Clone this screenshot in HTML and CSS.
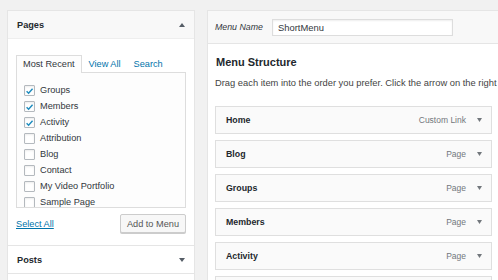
FILE: index.html
```html
<!DOCTYPE html>
<html lang="en">
<head>
  <meta charset="UTF-8" />
  <title>Menus</title>
  <link rel="stylesheet" href="styles.css">
</head>
<body>
  <div class="screen">
    <!-- Left column: items that can be added -->
    <aside class="sidebar">
      <div class="accordion">
        <section class="acc-section">
          <h3 class="acc-title">Pages
            <svg class="caret" width="6" height="4" viewBox="0 0 6 4"><path d="M0 4L3 0L6 4Z"/></svg>
          </h3>
          <div class="acc-body">
            <ul class="tabs">
              <li class="tab active">Most Recent</li>
              <li class="tab"><a href="#">View All</a></li>
              <li class="tab"><a href="#">Search</a></li>
            </ul>
            <div class="tab-panel">
              <ul class="checklist">
                <li><label><span class="box on"><svg viewBox="0 0 10 10"><path d="M1.8 5.2L4 7.4L8.4 2.4"/></svg></span>Groups</label></li>
                <li><label><span class="box on"><svg viewBox="0 0 10 10"><path d="M1.8 5.2L4 7.4L8.4 2.4"/></svg></span>Members</label></li>
                <li><label><span class="box on"><svg viewBox="0 0 10 10"><path d="M1.8 5.2L4 7.4L8.4 2.4"/></svg></span>Activity</label></li>
                <li><label><span class="box"></span>Attribution</label></li>
                <li><label><span class="box"></span>Blog</label></li>
                <li><label><span class="box"></span>Contact</label></li>
                <li><label><span class="box"></span>My Video Portfolio</label></li>
                <li><label><span class="box"></span>Sample Page</label></li>
              </ul>
            </div>
            <div class="actions">
              <a class="select-all" href="#">Select All</a>
              <button class="button">Add to Menu</button>
            </div>
          </div>
        </section>
        <section class="acc-section">
          <h3 class="acc-title">Posts
            <svg class="caret" width="6" height="4" viewBox="0 0 6 4"><path d="M0 0L3 4L6 0Z"/></svg>
          </h3>
        </section>
        <!-- next section, only its top edge is in view -->
        <section class="acc-section">
          <div class="acc-title"></div>
        </section>
      </div>
    </aside>

    <!-- Right column: the menu being edited -->
    <main class="menu-edit">
      <div class="menu-header">
        <label class="menu-name-label" for="menu-name">Menu Name</label>
        <input class="menu-name" id="menu-name" type="text" value="ShortMenu">
      </div>
      <div class="menu-body">
        <h3 class="menu-title">Menu Structure</h3>
        <p class="menu-hint">Drag each item into the order you prefer. Click the arrow on the right</p>
        <ul class="menu-items">
          <li class="menu-item"><span class="item-title">Home</span><span class="item-type">Custom Link</span><svg class="item-arrow" width="5" height="4" viewBox="0 0 5 4"><path d="M0 0L2.5 4L5 0Z"/></svg></li>
          <li class="menu-item"><span class="item-title">Blog</span><span class="item-type">Page</span><svg class="item-arrow" width="5" height="4" viewBox="0 0 5 4"><path d="M0 0L2.5 4L5 0Z"/></svg></li>
          <li class="menu-item"><span class="item-title">Groups</span><span class="item-type">Page</span><svg class="item-arrow" width="5" height="4" viewBox="0 0 5 4"><path d="M0 0L2.5 4L5 0Z"/></svg></li>
          <li class="menu-item"><span class="item-title">Members</span><span class="item-type">Page</span><svg class="item-arrow" width="5" height="4" viewBox="0 0 5 4"><path d="M0 0L2.5 4L5 0Z"/></svg></li>
          <li class="menu-item"><span class="item-title">Activity</span><span class="item-type">Page</span><svg class="item-arrow" width="5" height="4" viewBox="0 0 5 4"><path d="M0 0L2.5 4L5 0Z"/></svg></li>
          <li class="menu-item"></li>
        </ul>
      </div>
    </main>
  </div>
</body>
</html>
```

FILE: styles.css
```css
* {
  margin: 0;
  padding: 0;
  box-sizing: border-box;
}
body {
  font-family: "Liberation Sans", Arial, sans-serif;
  font-size: 9.2px;
  color: #444;
  background: #f1f1f1;
  overflow: hidden;
  width: 498px;
  height: 280px;
}
ul {
  list-style: none;
}
a {
  color: #0073aa;
  text-decoration: none;
}

.screen {
  display: flex;
  align-items: flex-start;
  gap: 12px;
  padding: 10px 0 0 7px;
}

/* Left column accordion */
.sidebar {
  width: 188px;
  flex: none;
}
.accordion {
  background: #fff;
  border: 1px solid #e5e5e5;
}
.acc-section + .acc-section {
  border-top: 1px solid #e5e5e5;
}
.acc-title {
  display: flex;
  align-items: center;
  justify-content: space-between;
  height: 27px;
  padding: 0 9px 0 9px;
  font-size: 9.2px;
  font-weight: bold;
  color: #23282d;
  background: #fff;
}
.acc-section:first-child .acc-title {
  background: #f8f8f8;
  border-bottom: 1px solid #eee;
  height: 28px;
}
.caret {
  fill: #555d66;
}
.acc-body {
  padding: 16px 8px 12px 8px;
}

/* Tabs */
.tabs {
  display: flex;
  align-items: flex-end;
  height: 17px;
}
.tab {
  line-height: 16px;
  padding: 0 6px;
  margin-right: 1px;
}
.tab.active {
  color: #32373c;
  background: #fdfdfd;
  border: 1px solid #ddd;
  border-bottom: none;
  height: 18px;
  position: relative;
  z-index: 1;
  margin-bottom: -1px;
}
.tab-panel {
  height: 136px;
  overflow: hidden;
  border: 1px solid #ddd;
  background: #fdfdfd;
  padding: 9px 7px 0;
}
.checklist li {
  height: 16px;
}
.checklist label {
  display: flex;
  align-items: center;
  height: 16px;
  color: #32373c;
}
.box {
  width: 11px;
  height: 11px;
  margin-right: 5px;
  border: 1px solid #b4b9be;
  border-radius: 1px;
  background: #fff;
  box-shadow: inset 0 1px 2px rgba(0, 0, 0, 0.08);
  display: flex;
}
.box svg {
  width: 10px;
  height: 10px;
  fill: none;
  stroke: #1e8cbe;
  stroke-width: 1.6;
}

.actions {
  display: flex;
  align-items: center;
  justify-content: space-between;
  margin-top: 6px;
}
.select-all {
  text-decoration: underline;
  margin-top: 1px;
}
.button {
  font-family: inherit;
  font-size: 9.2px;
  color: #555;
  height: 19px;
  padding: 0 6px;
  background: #f7f7f7;
  border: 1px solid #ccc;
  border-radius: 2px;
  box-shadow: 0 1px 0 #ccc;
}

/* Right column: menu editor */
.menu-edit {
  width: 291px;
  flex: none;
  background: #fff;
  border: 1px solid #e5e5e5;
  border-right: none;
}
.menu-header {
  display: flex;
  align-items: center;
  height: 33px;
  padding: 0 7px;
  background: #f8f8f8;
  border-bottom: 1px solid #e5e5e5;
}
.menu-name-label {
  font-style: italic;
  font-size: 8.8px;
  color: #32373c;
  width: 57px;
}
.menu-name {
  width: 181px;
  height: 17px;
  font-family: inherit;
  font-size: 9.4px;
  color: #32373c;
  padding: 0 5px;
  border: 1px solid #ddd;
  background: #fff;
  box-shadow: inset 0 1px 2px rgba(0, 0, 0, 0.07);
  outline: none;
}
.menu-body {
  padding: 11px 6px 0 7px;
}
.menu-title {
  font-size: 11px;
  font-weight: bold;
  color: #23282d;
  line-height: 14px;
  padding-left: 1px;
}
.menu-hint {
  margin-top: 8px;
  line-height: 12px;
  font-size: 9.35px;
  white-space: nowrap;
}
.menu-items {
  margin-top: 17px;
}
.menu-item {
  display: flex;
  align-items: center;
  height: 28px;
  margin-bottom: 6px;
  padding: 0 9px 0 10px;
  background: #fafafa;
  border: 1px solid #dfdfdf;
}
.item-title {
  flex: 1;
  font-weight: bold;
  font-size: 8.8px;
  color: #23282d;
}
.item-type {
  font-size: 8.5px;
  color: #72777c;
  margin-right: 11px;
}
.item-arrow {
  fill: #72777c;
}
```
